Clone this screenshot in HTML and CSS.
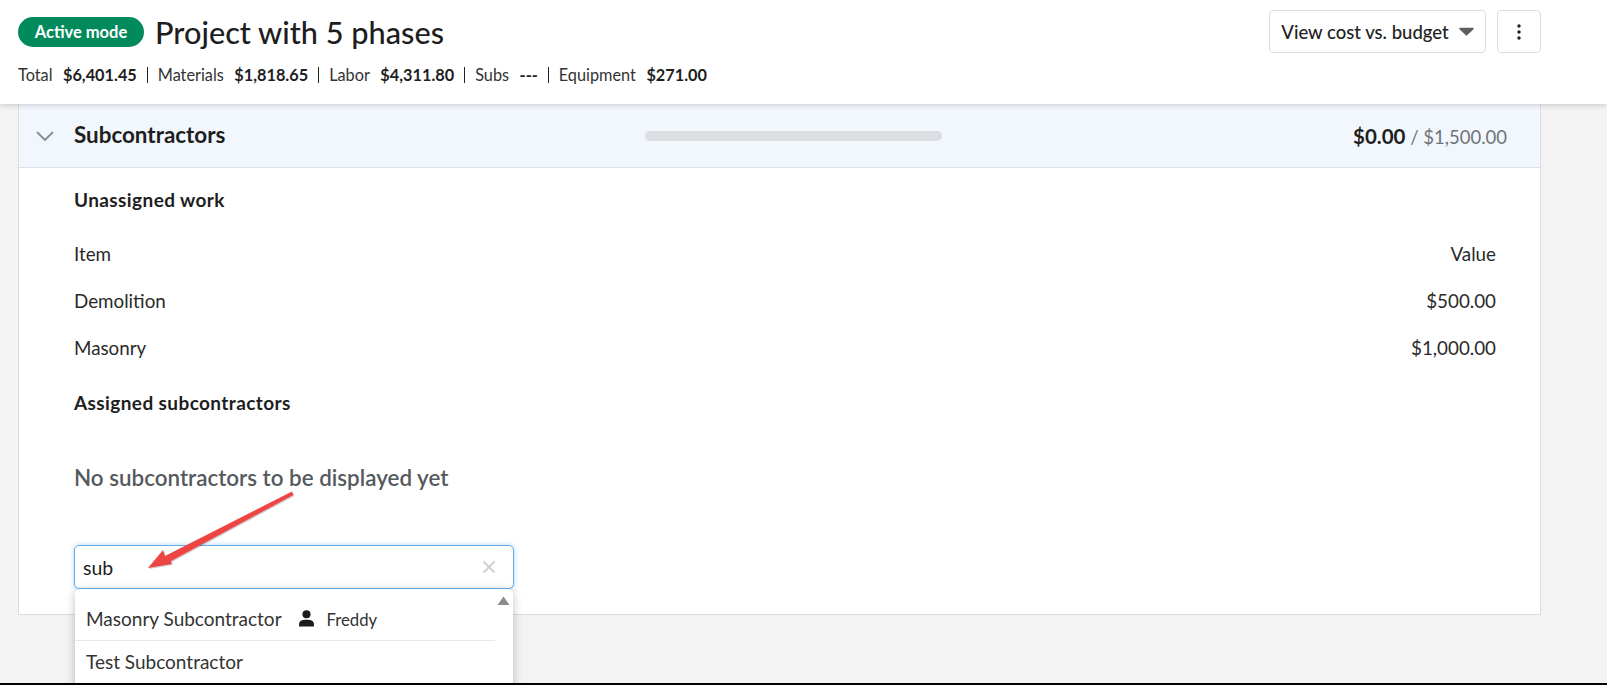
FILE: index.html
```html
<!DOCTYPE html>
<html lang="en">
<head>
<meta charset="utf-8">
<title>Project with 5 phases</title>
<link rel="stylesheet" href="styles.css">
</head>
<body>
<div class="page">
  <header class="topbar">
    <div class="topbar-main">
      <div class="title-row">
        <span class="badge">Active mode</span>
        <h1 class="title">Project with 5 phases</h1>
      </div>
      <div class="stats">
        <span class="stat"><span class="stat-label">Total</span><b>$6,401.45</b></span>
        <span class="stat"><span class="stat-label">Materials</span><b>$1,818.65</b></span>
        <span class="stat"><span class="stat-label">Labor</span><b>$4,311.80</b></span>
        <span class="stat"><span class="stat-label">Subs</span><b>---</b></span>
        <span class="stat"><span class="stat-label">Equipment</span><b>$271.00</b></span>
      </div>
    </div>
    <div class="actions">
      <button class="btn btn-view">View cost vs. budget
        <svg class="caret" width="15" height="9" viewBox="0 0 14 8"><path d="M1 0.5h12a.8.8 0 0 1 .6 1.3L7.6 7.5a.8.8 0 0 1-1.2 0L.4 1.8A.8.8 0 0 1 1 .5z" fill="#5f5f5f"/></svg>
      </button>
      <button class="btn btn-more" aria-label="More">
        <svg width="4" height="16" viewBox="0 0 4 16"><circle cx="2" cy="2" r="1.7" fill="#222"/><circle cx="2" cy="8" r="1.7" fill="#222"/><circle cx="2" cy="14" r="1.7" fill="#222"/></svg>
      </button>
    </div>
  </header>

  <section class="card">
    <div class="card-head">
      <svg class="chevron" width="18" height="10" viewBox="0 0 18 10"><path d="M1 1l8 8 8-8" fill="none" stroke="#8b9096" stroke-width="2"/></svg>
      <h2 class="card-title">Subcontractors</h2>
      <div class="progress"></div>
      <div class="amount"><b>$0.00</b> <span>/ $1,500.00</span></div>
    </div>
    <div class="card-body">
      <h3 class="section-title">Unassigned work</h3>
      <div class="rows">
        <div class="row"><span>Item</span><span>Value</span></div>
        <div class="row"><span>Demolition</span><span>$500.00</span></div>
        <div class="row"><span>Masonry</span><span>$1,000.00</span></div>
      </div>
      <h3 class="section-title section-assigned">Assigned subcontractors</h3>
      <p class="empty">No subcontractors to be displayed yet</p>
      <div class="combo">
        <div class="input"><span>sub</span>
          <svg width="14" height="14" viewBox="0 0 14 14"><path d="M1.5 1.5l11 11M12.5 1.5l-11 11" stroke="#cfcfcf" stroke-width="1.8" fill="none"/></svg>
        </div>
        <div class="menu">
          <div class="menu-list">
            <div class="option">Masonry Subcontractor
              <svg class="person" width="15" height="16" viewBox="0 0 15 16"><circle cx="7.5" cy="4" r="3.8" fill="#1c1c1c"/><path d="M0.5 15.5v-2.3c0-2.6 2.4-4 7-4s7 1.4 7 4v2.3z" fill="#1c1c1c"/></svg>
              <span class="owner">Freddy</span>
            </div>
            <div class="option">Test Subcontractor</div>
          </div>
          <div class="scrollbar"><svg width="13" height="10" viewBox="0 0 13 10"><path d="M6.5 .5l6 8.5H.5z" fill="#8c8c8c"/></svg></div>
        </div>
      </div>
    </div>
  </section>

  <svg class="annotation" width="160" height="82" viewBox="0 0 160 82">
    <path d="M2 78L17 60 19 66 146 1.5 147.3 5 25 71 25.7 74z" fill="#ef4444"/>
  </svg>
  <div class="bottom-line"></div>
</div>
</body>
</html>
```
FILE: styles.css
```css
* { box-sizing: border-box; }
html, body { margin: 0; height: 100%; }
body {
  font-family: "Lato", "Liberation Sans", sans-serif;
  color: #1e1e1e;
  background: #f3f3f3;
  overflow: hidden;
}
.page { position: relative; height: 685px; overflow: hidden; display: flex; flex-direction: column; }
.topbar {
  position: relative;
  z-index: 2;
  height: 104px;
  flex: none;
  background: #fff;
  box-shadow: 0 1px 6px rgba(0,0,0,.18);
  padding: 10px 66px 0 18px;
  display: flex;
  justify-content: space-between;
}
.title-row { display: flex; align-items: center; gap: 11px; margin-top: 7px; height: 30px; }
.badge {
  background: #018a5c;
  color: #fff;
  font-weight: 700;
  font-size: 16.5px;
  height: 30px;
  width: 126px;
  border-radius: 15px;
  display: flex;
  align-items: center;
  justify-content: center;
}
.title { margin: 0; font-size: 30.7px; font-weight: 500; }
.stats { display: flex; margin-top: 20px; font-size: 16.3px; line-height: 16px; }
.stat { padding: 0 10px; border-left: 1px solid #222; display: flex; gap: 10.5px; white-space: nowrap; }
.stat:first-child { padding-left: 0; border-left: 0; }
.stat b { font-weight: 700; }
.stat-label { color: #333; }
.actions { display: flex; gap: 11px; align-items: flex-start; }
.btn {
  height: 43px;
  background: #fff;
  border: 1px solid #ddd;
  border-radius: 4px;
  font: 500 18.5px "Lato", sans-serif;
  color: #222;
  display: flex;
  align-items: center;
  justify-content: center;
}
.btn-view { width: 217px; gap: 10px; }
.btn-more { width: 44px; }
.card {
  margin: 0 66px 0 18px;
  background: #fff;
  border: 1px solid #ddd;
  border-top: 0;
  height: 511px;
  flex: none;
}
.card-head {
  height: 64px;
  background: #f2f6fd;
  border-bottom: 1px solid #dde1e6;
  display: flex;
  align-items: center;
  padding: 0 33px 0 17px;
  position: relative;
}
.chevron { flex: none; }
.card-title { margin: -3px 0 0 20px; font-size: 22.4px; font-weight: 700; width: 571px; }
.progress { width: 297px; height: 10px; border-radius: 5px; background: #dcdde0; }
.amount { margin-left: auto; font-size: 18.5px; }
.amount b { font-weight: 700; font-size: 20.5px; }
.amount span { color: #6f7478; }
.card-body { padding: 22px 44px 0 55px; }
.section-title { margin: 0; font-size: 19px; font-weight: 700; line-height: 20px; letter-spacing: .4px; }
.rows { margin-top: 20px; }
.row { display: flex; justify-content: space-between; height: 47px; align-items: center; font-size: 18.8px; color: #2a2a2a; }
.section-assigned { margin-top: 22px; }
.empty { margin: 52px 0 0; font-size: 22.4px; font-weight: 600; color: #555a5e; line-height: 26px; }
.combo { position: relative; width: 440px; margin-top: 54px; }
.input {
  height: 44px;
  border: 1px solid #63aeea;
  border-radius: 5px;
  box-shadow: 0 0 5px rgba(99,174,234,.5);
  background: #fff;
  padding: 0 17px 0 8px;
  display: flex;
  align-items: center;
  justify-content: space-between;
  font-size: 19.5px;
}
.menu {
  position: absolute;
  top: 44px;
  left: 1px;
  right: 1px;
  height: 120px;
  background: #fff;
  border-radius: 5px;
  box-shadow: 0 2px 10px rgba(0,0,0,.25);
  display: flex;
  z-index: 1;
}
.menu-list { flex: 1; padding-top: 9px; margin-right: 18px; }
.option {
  height: 43px;
  padding: 0 0 2px 11px;
  display: flex;
  align-items: center;
  font-size: 19px;
  color: #333;
  border-bottom: 1px solid #e8e8e8;
}
.person { margin-left: 16px; width: 17px; height: 17px; }
.owner { margin: 3px 0 0 12px; font-size: 16.7px; }
.scrollbar { position: absolute; right: 3px; top: 1px; }
.annotation { position: absolute; left: 146px; top: 490px; z-index: 3; filter: drop-shadow(1px 1px .6px rgba(0,0,0,.2)); }
.bottom-line { position: absolute; left: 0; right: 0; bottom: 0; height: 2px; background: #000; z-index: 4; }
```
